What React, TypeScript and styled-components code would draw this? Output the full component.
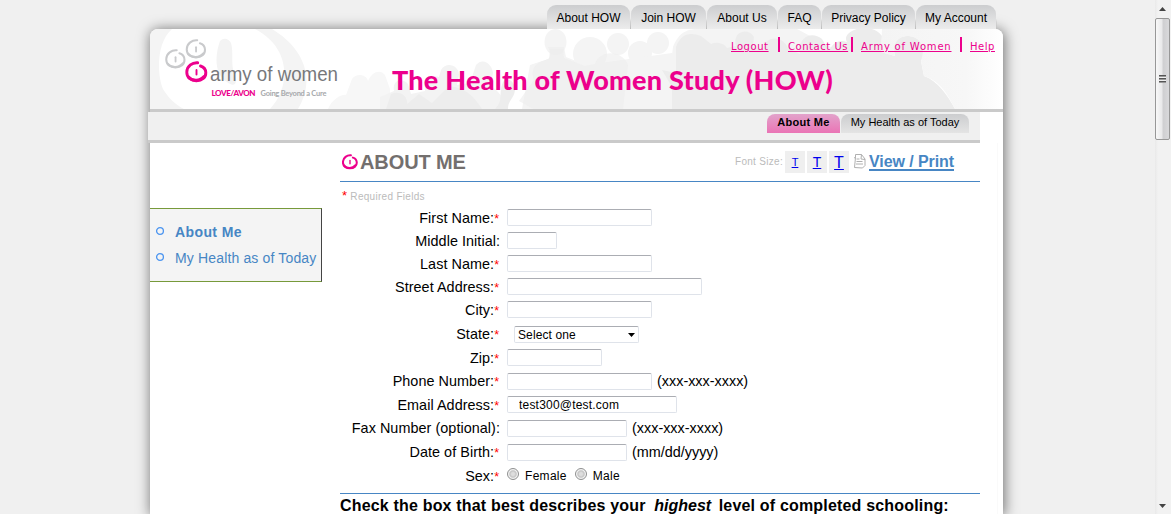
import React from "react";
import styled, { createGlobalStyle, css } from "styled-components";

const PINK = "#ec008c";
const BLUE = "#4786c4";

const Global = createGlobalStyle`
  * { box-sizing: border-box; }
  body { margin: 0; background: #f0f0f0; font-family: "Liberation Sans", Arial, sans-serif; color: #000; overflow: hidden; }
  a { color: inherit; }
`;

const Screen = styled.div`
  display: flex;
  height: 514px;
  overflow: hidden;
`;

const Viewport = styled.main`
  flex: 1;
  padding: 5px 0 0 150px;
  overflow: hidden;
`;

const TopTabs = styled.nav`
  display: flex;
  justify-content: flex-end;
  gap: 1px;
  width: 846px;
  height: 24px;
  position: relative;
  z-index: 1;
`;

const TopTab = styled.a<{ $w: number }>`
  width: ${(p) => p.$w}px;
  height: 24px;
  border-radius: 9px 9px 0 0;
  background: linear-gradient(#cccdcf, #ececec);
  font-size: 12px;
  line-height: 26px;
  text-align: center;
  white-space: nowrap;
  box-shadow: 1px 8px 0 -0.5px #c4c4c4;
  clip-path: inset(0 -1px 0 0);
`;

const Card = styled.div`
  width: 853px;
  height: 485px;
  border-radius: 8px 8px 0 0;
  background: #fff;
  box-shadow: 1px 1px 13px 1px rgba(0, 0, 0, 0.5);
`;

const Header = styled.header`
  display: grid;
  height: 83px;
  border-bottom: 3px solid #cacaca;
  border-radius: 8px 8px 0 0;
  overflow: hidden;
  > * { grid-area: 1 / 1; }
`;

const HeaderContent = styled.div`
  display: flex;
  height: 80px;
`;

const HeaderMain = styled.div`
  flex: 1;
  padding-top: 8px;
`;

const Links = styled.div`
  display: flex;
  height: 18px;
  padding-left: 391px;
  color: ${PINK};
  font-family: "DejaVu Sans", Verdana, sans-serif;
  font-size: 10px;
`;

const LinkCell = styled.a<{ $w: number; $s?: number }>`
  width: ${(p) => p.$w}px;
  line-height: 19px;
  white-space: nowrap;
  letter-spacing: ${(p) => p.$s ?? 0.55}px;
  text-decoration: underline;
  text-underline-offset: 1px;
`;

const LinkBar = styled.i<{ $l: number; $r: number }>`
  width: 2px;
  height: 15px;
  margin: 0 ${(p) => p.$r}px 0 ${(p) => p.$l}px;
  background: ${PINK};
`;

const Title = styled.h1`
  margin: 7px 0 0 52px;
  color: ${PINK};
  font: 900 27px/36px Lato, sans-serif;
  letter-spacing: 0.25px;
  white-space: nowrap;
`;

const SubNav = styled.nav`
  display: flex;
  justify-content: flex-end;
  gap: 1px;
  width: 832px;
  height: 31px;
  margin-left: -2px;
  padding: 2px 11px 0 0;
  background: #f0f0f0;
  border-bottom: 3px solid #cacaca;
`;

const SubTab = styled.a<{ $w: number; $active?: boolean }>`
  width: ${(p) => p.$w}px;
  height: 19px;
  border-radius: 8px 8px 0 0;
  font-size: 11px;
  line-height: 17px;
  text-align: center;
  white-space: nowrap;
  background: linear-gradient(#cccdcf, #e4e4e4);
  ${(p) =>
    p.$active &&
    css`
      font-weight: bold;
      letter-spacing: 0.3px;
      background: linear-gradient(#e2a3cb, #ea74b5);
    `}
`;

const Body = styled.div`
  display: flex;
  align-items: flex-start;
  height: 371px;
  width: 848px;
  border-right: 1px solid #fafafa;
`;

const Sidebar = styled.ul`
  list-style: none;
  width: 172px;
  height: 74px;
  margin: 65px 18px 0 0;
  padding: 10px 0 0 5px;
  background: #f4f4f4;
  border: 1px solid #779a3a;
  border-left: 0;
  border-right-color: #444;
`;

const SideItem = styled.li<{ $bold?: boolean }>`
  display: flex;
  align-items: center;
  height: 26px;
  color: ${BLUE};
  font-size: 14px;
  letter-spacing: ${(p) => (p.$bold ? 0.4 : 0.15)}px;
  white-space: nowrap;
  font-weight: ${(p) => (p.$bold ? "bold" : "normal")};
`;

const Content = styled.section`
  width: 640px;
`;

const HeadingRow = styled.div`
  display: flex;
  height: 39px;
  padding: 8px 26px 0 2px;
  border-bottom: 1px solid ${BLUE};
`;

const Heading = styled.h2`
  flex: 1;
  margin: 0 0 0 2px;
  color: #736f6e;
  font-size: 20px;
  line-height: 22px;
  letter-spacing: -0.1px;
`;

const SizeLabel = styled.span`
  margin-right: 2px;
  color: #bbb;
  font-size: 10px;
  line-height: 21px;
  letter-spacing: 0.3px;
`;

const SizeButton = styled.a<{ $size: number }>`
  width: 20px;
  height: 22px;
  margin-right: 2px;
  background: #efefef;
  color: #00e;
  font-size: ${(p) => p.$size}px;
  line-height: 23px;
  text-align: center;
  text-decoration: underline;
`;

const PrintLink = styled.a`
  width: 85px;
  margin-left: 3px;
  color: ${BLUE};
  font-size: 16px;
  font-weight: bold;
  line-height: 21px;
  letter-spacing: -0.08px;
  white-space: nowrap;
  text-decoration: underline;
  text-decoration-thickness: 2px;
  text-underline-offset: 2px;
`;

const Star = styled.span`
  color: #f00;
`;

const Required = styled.div`
  display: flex;
  gap: 3px;
  height: 24px;
  padding: 8px 0 0 2px;
  color: #bbb;
  font-size: 10px;
  line-height: 14px;
  letter-spacing: 0.3px;
  ${Star} { font-size: 13px; line-height: 12px; }
`;

const Row = styled.div<{ $h: number; $lift?: boolean }>`
  display: flex;
  height: ${(p) => p.$h}px;
  padding-top: 3px;
  font-size: 14.4px;
  line-height: ${(p) => (p.$lift ? 16 : 18)}px;
`;

const Label = styled.label`
  width: 160px;
  margin-right: 7px;
  text-align: right;
  white-space: nowrap;
  letter-spacing: 0.05px;
  ${Star} { font-size: 12.5px; line-height: 1; letter-spacing: 1px; }
`;

const field = css`
  height: 17px;
  border: 1px solid #dfe3ea;
  border-top-color: #abadb3;
  border-radius: 2px;
  background: #fff;
  color: #000;
  font: 12px "Liberation Sans", Arial, sans-serif;
`;

const Input = styled.input<{ $w: number }>`
  ${field}
  width: ${(p) => p.$w}px;
  padding: 0 11px;
  letter-spacing: 0.2px;
  outline: 0;
`;

const Select = styled.div`
  ${field}
  display: flex;
  justify-content: space-between;
  align-items: center;
  width: 125px;
  margin-left: 7px;
  padding: 1px 3px 0;
  letter-spacing: 0.1px;
`;

const Hint = styled.span`
  margin-left: 5px;
`;

const Radio = styled.i`
  width: 12px;
  height: 12px;
  border: 1px solid #8e8f8f;
  border-radius: 50%;
  background: radial-gradient(#dedede 20%, #c4c4c4 45%, #f4f4f4 62%);
`;

const RadioText = styled.span`
  margin: 0 8px 0 6px;
  font-size: 12px;
  letter-spacing: 0.3px;
`;

const Question = styled.h3`
  margin: 4px 0 0;
  border-top: 1px solid ${BLUE};
  padding-top: 3px;
  font-size: 16px;
  line-height: 18px;
  letter-spacing: 0.18px;
  white-space: nowrap;
  em { margin: 0 3px 0 4px; letter-spacing: 0; }
`;

const Scrollbar = styled.aside`
  display: flex;
  flex-direction: column;
  align-items: center;
  width: 16px;
  padding: 7px 1px 6px 0;
  background: linear-gradient(90deg, #e9e9e9, #f2f2f2 3px, #f2f2f2);
`;

const Thumb = styled.div`
  width: 15px;
  height: 122px;
  margin: 7px 0 auto;
  padding: 56px 3px 0;
  border: 1px solid #979797;
  border-radius: 2px;
  background: linear-gradient(90deg, #f8f8f8, #e9e9ea 45%, #cfcfd1 55%, #d9d9db);
`;

const Grip = styled.div`
  width: 7px;
  height: 8px;
  background: repeating-linear-gradient(#555 0 1px, #999 1px 2px, #eee 2px 3px);
`;

const SWIRL =
  "M12.200 1.300C7 .8 1.500 4.500 1.300 10.600c-.2 6 4.700 8.700 9.700 8.600 5.600 0 9.500-3.200 9.300-8.200-.2-3.400-2.300-5.600-5.300-6.500";

const Swirl = ({ color, weight = 2.1 }: { color: string; weight?: number }) => (
  <g fill="none" stroke={color} strokeLinecap="round">
    <path d={SWIRL} strokeWidth={weight} />
    <path d="M3 15.500c3.500 4.300 11.500 4.300 15.500-.5" strokeWidth={weight} />
    <path d="M11 8.500v4.500" strokeWidth="1.900" />
  </g>
);

const Bullet = () => (
  <svg width="10" height="10" viewBox="0 0 10 10" style={{ margin: "-3px 10px 0 0" }}>
    <circle cx="5" cy="5" r="3.400" fill="none" stroke="#4a94f0" strokeWidth="1.300" />
  </svg>
);

const Crowd = () => (
  <svg width="853" height="80" viewBox="0 0 853 80">
    <defs>
      <linearGradient id="fade">
        <stop offset="0" stopColor="#f4f4f4" />
        <stop offset=".7" stopColor="#f7f7f7" />
        <stop offset="1" stopColor="#fff" />
      </linearGradient>
    </defs>
    <path fill="#f4f4f4" d="M0 0H22C6 14 7 46 13 60 19 70 26 76 34 80H0ZM105 0h17c30 18 45 48 26 80h-28c22-24 20-62-15-80Z" />
    <path fill="#f3f3f3" d="M70 12c4-4 9-2 11 2 3 10-1 21 4 34 3 8-2 10-8 5C64 45 65 26 70 12Z" />
    <path fill="#f7f7f7" d="M178 80c4-10 14-15 18-14l6-16c4-6 14-5 16 2 4-10 13-12 17-6l5 14v20Z" />
    <path fill="#f3f3f3" d="M230 80V68l14-6c-2-11 8-14 14-7l3 10 14-3c0-11 7-17 14-14l2-7c5-9 18-5 18 5l-2 10 13-2 6-18c7-8 16-1 17 8l-2 13c12 8 14 17 14 23Z" />
    <path fill="#ededed" d="M236 80l5-15c10-4 17 3 16 10l12-10 13 9 17-17c16 2 24 9 33 23ZM345 80c9-9 3-15 8-27 4-6 12-1 12 8-1 9-7 10-7 19Z" />
    <g fill="#f4f4f4">
      <circle cx="440" cy="25" r="17" />
      <circle cx="468" cy="15" r="11" />
      <circle cx="490" cy="24" r="12" />
      <circle cx="508" cy="14" r="11" />
      <path d="M372 80l8-44 18-6c4-3 2-8 0-12h16l2 10 20 8 86-12 12 56Z" />
      <path d="M523 18c8-20 20-18 34-18h90l150 80H515Z" />
    </g>
    <g fill="#ececec">
      <ellipse cx="405.500" cy="13" rx="11" ry="13" opacity=".6" />
      <path d="M400 20h13l1 9 21 8 10-2c4-14 27-15 33 1l-5 44h-90l-14-8 15-21c-3-10-1-17 15-21Z" opacity=".6" />
      <path d="M522 80V58l-10-17 14 3V18c4-12 13-16 25-11l10 8c6-3 14 0 16 4l9-2c-4-15 12-19 18-9l-1 10 10 3c1-14 19-16 25-2l12 6c-3-16 11-24 22-15l7 12c4-9 10-12 18-9C690 2 720-9 732 7l-1 16 14 4c-4-14 4-21 14-20 13 1 18 13 12 25l3 15c14 5 24 20 31 33Z" />
    </g>
    <path fill="url(#fade)" d="M732 0h121v80h-48c-7-13-13-27-31-33l-3-15c5-14 0-23-12-25-11 0-17 7-14 20l-14-4Z" />
  </svg>
);

const Logo = () => (
  <svg width="190" height="80" viewBox="0 0 190 80" overflow="visible">
    <g transform="translate(15 20) scale(.96)"><Swirl color="#c9cacc" /></g>
    <g transform="translate(35.500 10) scale(.96)"><Swirl color="#c9cacc" /></g>
    <g transform="translate(35.500 32.500)"><Swirl color={PINK} weight={2.9} /></g>
    <text x="60" y="52" fontFamily="Liberation Sans, Arial, sans-serif" fontSize="20.500" fill="#77787b" textLength="128" lengthAdjust="spacingAndGlyphs">army of women</text>
    <text x="61.500" y="67" fontFamily="Lato, sans-serif" fontWeight="900" fontSize="8" fill={PINK} textLength="44">LOVE/AVON</text>
    <text x="110.500" y="67" fontFamily="Lato, sans-serif" fontWeight="700" fontSize="7.500" fill="#a7a9ac" textLength="66">Going Beyond a Cure</text>
  </svg>
);

const PrintIcon = () => (
  <svg width="13" height="16" viewBox="0 0 13 16" style={{ marginTop: 2, marginLeft: 2 }} fill="none" stroke="#b0b0b0">
    <path d="M2.500 4.500l-1 10 8 .5 2.500-2.500V6L8.500 1.500h-6v3M8.500 1.500 8 6l4 .5M3.500 6h3M3.500 8.500h6M3 11h7M1 5l2-1" />
  </svg>
);

type FieldRow = { label: string; h: number; w?: number; required?: boolean; lift?: boolean; hint?: string; value?: string; kind?: "select" | "sex" };

const rows: FieldRow[] = [
  { label: "First Name:", h: 23, w: 145, required: true },
  { label: "Middle Initial:", h: 23, w: 50 },
  { label: "Last Name:", h: 23, w: 145, required: true },
  { label: "Street Address:", h: 23, w: 195, required: true },
  { label: "City:", h: 25, w: 145, required: true },
  { label: "State:", h: 23, required: true, kind: "select", lift: true },
  { label: "Zip:", h: 24, w: 95, required: true },
  { label: "Phone Number:", h: 23, w: 145, required: true, hint: "(xxx-xxx-xxxx)", lift: true },
  { label: "Email Address:", h: 24, w: 170, required: true, value: "test300@test.com" },
  { label: "Fax Number (optional):", h: 24, w: 120, hint: "(xxx-xxx-xxxx)", lift: true },
  { label: "Date of Birth:", h: 24, w: 120, required: true, hint: "(mm/dd/yyyy)", lift: true },
  { label: "Sex:", h: 24, required: true, kind: "sex", lift: true },
];

const topTabs: [string, number][] = [
  ["About HOW", 83],
  ["Join HOW", 75],
  ["About Us", 70],
  ["FAQ", 43],
  ["Privacy Policy", 93],
  ["My Account", 80],
];

export default function App() {
  return (
    <Screen>
      <Global />
      <Viewport>
        <TopTabs>
          {topTabs.map(([name, w]) => (
            <TopTab key={name} $w={w}>{name}</TopTab>
          ))}
        </TopTabs>
        <Card>
          <Header>
            <Crowd />
            <HeaderContent>
              <Logo />
              <HeaderMain>
                <Links>
                  <LinkCell $w={38}>Logout</LinkCell>
                  <LinkBar $l={9} $r={8} />
                  <LinkCell $w={60}>Contact Us</LinkCell>
                  <LinkBar $l={3} $r={8} />
                  <LinkCell $w={90} $s={0.8}>Army of Women</LinkCell>
                  <LinkBar $l={9} $r={8} />
                  <LinkCell $w={25}>Help</LinkCell>
                </Links>
                <Title>The Health of Women Study (HOW)</Title>
              </HeaderMain>
            </HeaderContent>
          </Header>
          <SubNav>
            <SubTab $w={73} $active>About Me</SubTab>
            <SubTab $w={128}>My Health as of Today</SubTab>
          </SubNav>
          <Body>
            <Sidebar>
              <SideItem $bold><Bullet />About Me</SideItem>
              <SideItem><Bullet />My Health as of Today</SideItem>
            </Sidebar>
            <Content>
              <HeadingRow>
                <svg width="16" height="22" viewBox="0 -4 22 29"><Swirl color={PINK} weight={2.8} /></svg>
                <Heading>ABOUT ME</Heading>
                <SizeLabel>Font Size:</SizeLabel>
                <SizeButton $size={11}>T</SizeButton>
                <SizeButton $size={14}>T</SizeButton>
                <SizeButton $size={16}>T</SizeButton>
                <PrintIcon />
                <PrintLink>View / Print</PrintLink>
              </HeadingRow>
              <Required><Star>*</Star><span>Required Fields</span></Required>
              {rows.map((r) => (
                <Row key={r.label} $h={r.h} $lift={r.lift}>
                  <Label>{r.label}{r.required && <Star>*</Star>}</Label>
                  {r.kind === "select" && (
                    <Select>
                      Select one
                      <svg width="7" height="4"><path d="M0 0h7L3.500 4Z" /></svg>
                    </Select>
                  )}
                  {r.kind === "sex" && (
                    <>
                      <Radio /><RadioText>Female</RadioText>
                      <Radio /><RadioText>Male</RadioText>
                    </>
                  )}
                  {!r.kind && <Input $w={r.w ?? 0} defaultValue={r.value} />}
                  {r.hint && <Hint>{r.hint}</Hint>}
                </Row>
              ))}
              <Question>
                Check the box that best describes your <em>highest</em> level of completed schooling:
              </Question>
            </Content>
          </Body>
        </Card>
      </Viewport>
      <Scrollbar>
        <svg width="7" height="4"><path d="M0 4h7L3.500 0Z" fill="#444" /></svg>
        <Thumb><Grip /></Thumb>
        <svg width="7" height="4"><path d="M0 0h7L3.500 4Z" fill="#444" /></svg>
      </Scrollbar>
    </Screen>
  );
}
